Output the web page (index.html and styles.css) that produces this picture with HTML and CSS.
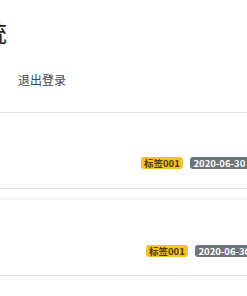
FILE: index.html
```html
<!DOCTYPE html>
<html lang="zh">
<head>
    <meta charset="UTF-8">
    <meta name="viewport" content="width=device-width, initial-scale=1.0">
    <title>博客系统</title>
    <link rel="stylesheet" href="styles.css">
</head>
<body>

    <div class="header">
        <h1 class="title">博客系统</h1>
        <a class="logout" href="#">退出登录</a>
    </div>

    <div class="post-list">
        <div class="post">
            <div class="post-meta first">
                <span class="badge badge-tag">标签001</span>
                <span class="badge badge-date">2020-06-30 15:30:00</span>
            </div>
        </div>
        <div class="post raised">
            <div class="post-meta second">
                <span class="badge badge-tag">标签001</span>
                <span class="badge badge-date">2020-06-30 15:30:00</span>
            </div>
        </div>
    </div>

</body>
</html>
```

FILE: styles.css
```css
html, body {
    overflow: hidden;
}

body {
    margin: 0;
    font-family: "Noto Sans CJK SC", "Noto Sans", sans-serif;
    background: #fff;
    color: #333;
}

.header {
    height: 112px;
    border-bottom: 1px solid #e3e3e3;
}

.title {
    margin: 0 0 0 -89px;
    padding-top: 18px;
    font-size: 24px;
    font-weight: normal;
    line-height: 28px;
    color: #222;
    white-space: nowrap;
}

.logout {
    display: block;
    margin-top: 26px;
    padding-left: 18px;
    font-size: 12px;
    line-height: 16px;
    color: #444;
    text-decoration: none;
}

.post {
    height: 75px;
    border-bottom: 1px solid #e3e3e3;
}

.post.raised {
    margin-top: 10px;
    border-top: 1px solid #f2f2f2;
    box-shadow: 0 -2px 3px rgba(0, 0, 0, 0.03);
}

.post-meta {
    padding-top: 44px;
    white-space: nowrap;
}

.post-meta.first {
    padding-left: 141px;
}

.post-meta.second {
    padding-top: 45px;
    padding-left: 146px;
}

.badge {
    display: inline-block;
    padding: 0 3px;
    font-size: 9.5px;
    font-weight: bold;
    line-height: 12px;
    border-radius: 3px;
    vertical-align: top;
}

.badge-tag {
    background-color: #f5c12b;
    color: #4a3c10;
}

.badge-date {
    margin-left: 4px;
    background-color: #6c757d;
    color: #fff;
}
```
